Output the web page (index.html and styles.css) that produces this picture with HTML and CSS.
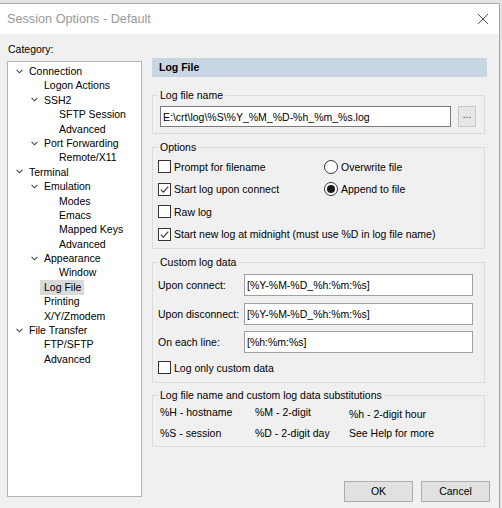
FILE: index.html
```html
<!DOCTYPE html>
<html>
<head>
<meta charset="utf-8">
<link rel="stylesheet" href="styles.css">
</head>
<body>
<div class="window">
  <div class="titlebar">
    <span class="title">Session Options - Default</span>
    <svg class="close" width="12" height="12" viewBox="0 0 12 12"><path d="M1 1 L11 11 M11 1 L1 11" stroke="#555" stroke-width="1" fill="none"/></svg>
  </div>
  <div class="body">
    <div class="left">
      <div class="cat-label">Category:</div>
      <div class="tree">
        <div class="node l0"><span class="tw"><svg width="7" height="5" viewBox="0 0 7 5"><polyline points="0.6,0.8 3.5,3.8 6.4,0.8" fill="none" stroke="#444" stroke-width="1.1"/></svg></span><span class="lbl">Connection</span></div>
        <div class="node l1"><span class="tw"></span><span class="lbl">Logon Actions</span></div>
        <div class="node l1"><span class="tw"><svg width="7" height="5" viewBox="0 0 7 5"><polyline points="0.6,0.8 3.5,3.8 6.4,0.8" fill="none" stroke="#444" stroke-width="1.1"/></svg></span><span class="lbl">SSH2</span></div>
        <div class="node l2"><span class="tw"></span><span class="lbl">SFTP Session</span></div>
        <div class="node l2"><span class="tw"></span><span class="lbl">Advanced</span></div>
        <div class="node l1"><span class="tw"><svg width="7" height="5" viewBox="0 0 7 5"><polyline points="0.6,0.8 3.5,3.8 6.4,0.8" fill="none" stroke="#444" stroke-width="1.1"/></svg></span><span class="lbl">Port Forwarding</span></div>
        <div class="node l2"><span class="tw"></span><span class="lbl">Remote/X11</span></div>
        <div class="node l0"><span class="tw"><svg width="7" height="5" viewBox="0 0 7 5"><polyline points="0.6,0.8 3.5,3.8 6.4,0.8" fill="none" stroke="#444" stroke-width="1.1"/></svg></span><span class="lbl">Terminal</span></div>
        <div class="node l1"><span class="tw"><svg width="7" height="5" viewBox="0 0 7 5"><polyline points="0.6,0.8 3.5,3.8 6.4,0.8" fill="none" stroke="#444" stroke-width="1.1"/></svg></span><span class="lbl">Emulation</span></div>
        <div class="node l2"><span class="tw"></span><span class="lbl">Modes</span></div>
        <div class="node l2"><span class="tw"></span><span class="lbl">Emacs</span></div>
        <div class="node l2"><span class="tw"></span><span class="lbl">Mapped Keys</span></div>
        <div class="node l2"><span class="tw"></span><span class="lbl">Advanced</span></div>
        <div class="node l1"><span class="tw"><svg width="7" height="5" viewBox="0 0 7 5"><polyline points="0.6,0.8 3.5,3.8 6.4,0.8" fill="none" stroke="#444" stroke-width="1.1"/></svg></span><span class="lbl">Appearance</span></div>
        <div class="node l2"><span class="tw"></span><span class="lbl">Window</span></div>
        <div class="node l1"><span class="tw"></span><span class="lbl sel">Log File</span></div>
        <div class="node l1"><span class="tw"></span><span class="lbl">Printing</span></div>
        <div class="node l1"><span class="tw"></span><span class="lbl">X/Y/Zmodem</span></div>
        <div class="node l0"><span class="tw"><svg width="7" height="5" viewBox="0 0 7 5"><polyline points="0.6,0.8 3.5,3.8 6.4,0.8" fill="none" stroke="#444" stroke-width="1.1"/></svg></span><span class="lbl">File Transfer</span></div>
        <div class="node l1"><span class="tw"></span><span class="lbl">FTP/SFTP</span></div>
        <div class="node l1"><span class="tw"></span><span class="lbl">Advanced</span></div>
      </div>
    </div>
    <div class="right">
      <div class="header">Log File</div>

      <fieldset class="group g-name">
        <legend>Log file name</legend>
        <div class="name-row">
          <input class="field name-field" type="text" value="E:\crt\log\%S\%Y_%M_%D-%h_%m_%s.log">
          <button class="browse">...</button>
        </div>
      </fieldset>

      <fieldset class="group g-opts">
        <legend>Options</legend>
        <div class="opts-grid">
          <div class="opt"><span class="cb"></span>Prompt for filename</div>
          <div class="opt"><span class="rb"></span>Overwrite file</div>
          <div class="opt"><span class="cb"><svg width="11" height="11" viewBox="0 0 11 11"><polyline points="1.8,5.6 4.3,8.1 9.3,2.6" fill="none" stroke="#333" stroke-width="1.1"/></svg></span>Start log upon connect</div>
          <div class="opt"><span class="rb on"><span class="dot"></span></span>Append to file</div>
          <div class="opt span2"><span class="cb"></span>Raw log</div>
          <div class="opt span2"><span class="cb"><svg width="11" height="11" viewBox="0 0 11 11"><polyline points="1.8,5.6 4.3,8.1 9.3,2.6" fill="none" stroke="#333" stroke-width="1.1"/></svg></span>Start new log at midnight (must use %D in log file name)</div>
        </div>
      </fieldset>

      <fieldset class="group g-custom">
        <legend>Custom log data</legend>
        <div class="custom-row"><span class="clabel">Upon connect:</span><input class="field cfield" type="text" value="[%Y-%M-%D_%h:%m:%s]"></div>
        <div class="custom-row"><span class="clabel">Upon disconnect:</span><input class="field cfield" type="text" value="[%Y-%M-%D_%h:%m:%s]"></div>
        <div class="custom-row"><span class="clabel">On each line:</span><input class="field cfield" type="text" value="[%h:%m:%s]"></div>
        <div class="opt only"><span class="cb"></span>Log only custom data</div>
      </fieldset>

      <fieldset class="group g-subs">
        <legend>Log file name and custom log data substitutions</legend>
        <div class="subs-grid">
          <span>%H - hostname</span><span>%M - 2-digit</span><span class="low">%h - 2-digit hour</span>
          <span>%S - session</span><span>%D - 2-digit day</span><span>See Help for more</span>
        </div>
      </fieldset>

      <div class="buttons">
        <button class="btn">OK</button>
        <button class="btn">Cancel</button>
      </div>
    </div>
  </div>
</div>
</body>
</html>
```

FILE: styles.css
```css
html, body {
  margin: 0;
  padding: 0;
}
body {
  background: #e4e4e4;
  width: 502px;
  height: 508px;
  overflow: hidden;
  font-family: "Liberation Sans", Arial, sans-serif;
  font-size: 10.5px;
  color: #000;
}
.window {
  margin-top: 3px;
  width: 500px;
  height: 505px;
  box-sizing: border-box;
  border-top: 1px solid #a6a6a6;
  border-right: 1px solid #a6a6a6;
  background: #f0f0f0;
  display: flex;
  flex-direction: column;
}
.titlebar {
  height: 30px;
  background: #fff;
  display: flex;
  align-items: center;
  justify-content: space-between;
  padding: 0 10px 0 7px;
  flex: none;
}
.title {
  font-size: 12.7px;
  color: #9a9a9a;
  line-height: 16px;
}
.close {
  display: block;
  margin-right: 0;
}
.body {
  flex: 1;
  display: flex;
  align-items: flex-start;
  padding-left: 7px;
  gap: 10px;
}
.left {
  width: 135px;
  display: flex;
  flex-direction: column;
}
.cat-label {
  margin-top: 8.5px;
  padding-left: 1px;
  line-height: 13px;
  height: 13px;
}
.tree {
  margin-top: 5.5px;
  height: 436px;
  box-sizing: border-box;
  border: 1px solid #b4b4b4;
  background: #fff;
  padding-top: 2px;
}
.node {
  height: 14.4px;
  line-height: 14.4px;
  display: flex;
  align-items: center;
  white-space: nowrap;
}
.l0 { padding-left: 6px; }
.l1 { padding-left: 21px; }
.l2 { padding-left: 36px; }
.tw {
  width: 15px;
  flex: none;
  display: flex;
  align-items: center;
  padding-left: 2px;
  box-sizing: border-box;
}
.tw svg { display: block; }
.lbl {
  display: inline-block;
}
.lbl.sel {
  background: #d9d9d9;
  margin-left: -4px;
  padding: 0 3px 0 4px;
  height: 15px;
  line-height: 15px;
}
.right {
  width: 338px;
  display: flex;
  flex-direction: column;
}
.header {
  margin-top: 24px;
  width: 335px;
  height: 19px;
  line-height: 19px;
  background: #c8d5e2;
  font-weight: bold;
  padding-left: 7px;
  box-sizing: border-box;
}
.group {
  width: 333px;
  box-sizing: border-box;
  margin: 0;
  border: 1px solid #dcdcdc;
  padding: 0 0 0 5px;
  min-width: 0;
}
.group legend {
  padding: 0 2px;
  line-height: 13px;
  height: 13px;
}
.g-name {
  margin-top: 11.5px;
  padding-top: 4.5px;
  padding-bottom: 6px;
}
.name-row {
  display: flex;
  margin-left: 2px;
  gap: 7px;
}
.field {
  font-family: "Liberation Sans", Arial, sans-serif;
  font-size: 10.5px;
  color: #000;
  border: 1px solid #9a9a9a;
  background: #fff;
  padding: 0 0 0 2px;
  margin: 0;
  box-sizing: border-box;
  outline: none;
}
.name-field {
  width: 291px;
  height: 21px;
  border-color: #7a7a7a;
}
.browse {
  width: 18px;
  height: 21px;
  padding: 0 0 4px;
  margin: 0;
  border: 1px solid #c8c8c8;
  background: #e6e6e6;
  font-family: "Liberation Sans", Arial, sans-serif;
  font-size: 10px;
  color: #333;
  line-height: 10px;
  box-sizing: border-box;
}
.g-opts {
  margin-top: 6.5px;
  padding-top: 2px;
  padding-bottom: 2.5px;
}
.opts-grid {
  display: grid;
  grid-template-columns: 166px auto;
  grid-auto-rows: 22.5px;
}
.span2 { grid-column: 1 / span 2; }
.opt {
  display: flex;
  align-items: center;
  white-space: nowrap;
}
.cb {
  width: 13px;
  height: 13px;
  box-sizing: border-box;
  border: 1px solid #333;
  background: #fff;
  margin-right: 3px;
  flex: none;
  display: flex;
  align-items: center;
  justify-content: center;
}
.cb svg { display: block; }
.rb {
  width: 14px;
  height: 14px;
  box-sizing: border-box;
  border: 1px solid #333;
  border-radius: 50%;
  background: #fff;
  margin-right: 3px;
  flex: none;
  display: flex;
  align-items: center;
  justify-content: center;
}
.rb .dot {
  width: 8px;
  height: 8px;
  border-radius: 50%;
  background: #1a1a1a;
}
.g-custom {
  margin-top: 6.5px;
  padding-top: 5.5px;
  padding-bottom: 6.5px;
}
.custom-row {
  display: flex;
  align-items: center;
  height: 22px;
  margin-bottom: 6.5px;
}
.clabel {
  width: 86px;
  flex: none;
}
.cfield {
  width: 229px;
  height: 22px;
  border-color: #a0a0a0;
}
.only {
  height: 16px;
  margin-top: 0.5px;
}
.g-subs {
  margin-top: 5.5px;
  padding-top: 0;
  padding-bottom: 2px;
}
.subs-grid {
  display: grid;
  grid-template-columns: 95px 94px auto;
  grid-auto-rows: 21px;
  align-items: center;
  margin-left: 2px;
  white-space: nowrap;
}
.subs-grid .low {
  position: relative;
  top: 1.5px;
}
.buttons {
  margin-top: 34px;
  display: flex;
  justify-content: flex-end;
  gap: 8px;
}
.btn {
  width: 69px;
  height: 21px;
  margin: 0;
  padding: 0;
  border: 1px solid #adadad;
  background: #e1e1e1;
  font-family: "Liberation Sans", Arial, sans-serif;
  font-size: 10.5px;
  color: #000;
  box-sizing: border-box;
}
```
